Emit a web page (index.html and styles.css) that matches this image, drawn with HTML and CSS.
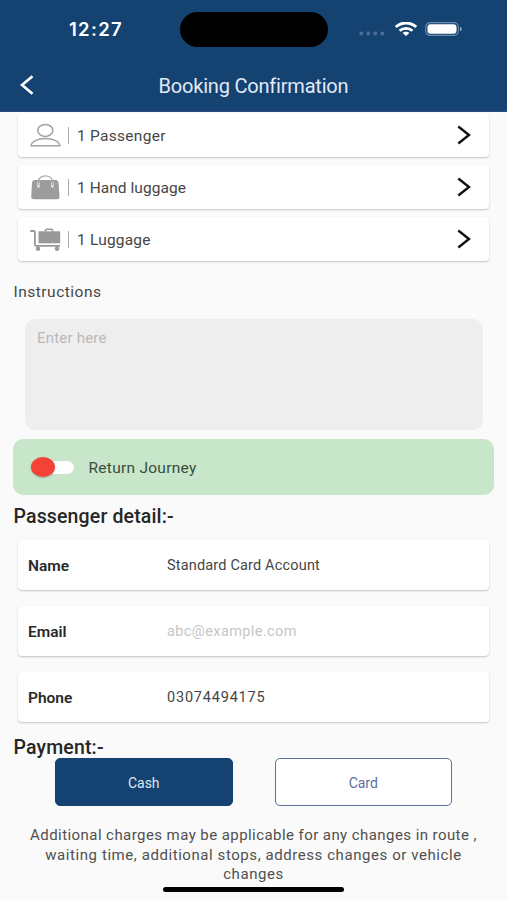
FILE: index.html
```html
<!DOCTYPE html>
<html lang="en">
<head>
<meta charset="utf-8">
<meta name="viewport" content="width=device-width, initial-scale=1">
<title>Booking Confirmation</title>
<link rel="stylesheet" href="styles.css">
</head>
<body>
<div class="screen">
  <header class="top">
    <div class="status">
      <span class="time">12:27</span>
      <span class="island"></span>
      <span class="signals">
        <svg class="dots" width="26" height="5" viewBox="0 0 26 5" fill="#4a7099"><circle cx="2.3" cy="2.5" r="2"/><circle cx="9.3" cy="2.5" r="2"/><circle cx="16.3" cy="2.5" r="2"/><circle cx="23.3" cy="2.5" r="2"/></svg>
        <svg class="wifi" width="22" height="14" viewBox="0 0 22 14" fill="none" stroke="#fff"><path d="M.8 5C6.5-.4 15.5-.4 21.200 5" stroke-width="2.900"/><path d="M4.600 8.800c3.600-3.300 9.200-3.300 12.800 0" stroke-width="2.700"/><path d="M11 13.900 7.600 10.900c1.800-1.700 5-1.700 6.800 0z" fill="#fff" stroke="none"/></svg>
        <svg class="battery" width="38" height="14" viewBox="0 0 38 14"><rect x=".7" y=".7" width="32.600" height="12.600" rx="4.300" fill="none" stroke="#6d8bad" stroke-width="1.200"/><rect x="2.500" y="2.300" width="29" height="9.400" rx="3" fill="#fff"/><path d="M35 4.700c2.400.7 2.400 3.900 0 4.600z" fill="#8ba3bf"/></svg>
      </span>
    </div>
    <div class="bar">
      <svg class="back" width="14" height="20" viewBox="0 0 14 20" fill="none" stroke="#fff" stroke-width="2.700"><path d="M12.500 1.200 2 10l10.500 8.800"/></svg>
      <h1 class="title">Booking Confirmation</h1>
    </div>
  </header>
  <main class="content">
    <section class="options">
      <div class="card option">
        <svg class="icon" width="32" height="26" viewBox="0 0 32 26" fill="none" stroke="#a3a3a3" stroke-width="1.500"><ellipse cx="15.300" cy="7.400" rx="7.500" ry="6"/><path d="M1.100 22.700c1-9.500 27.800-9.500 28.800 0z"/></svg>
        <span class="divider"></span><span class="label">1 Passenger</span>
        <svg class="chevron" width="14" height="20" viewBox="0 0 14 20"><path d="M1.300 1.500 12 10 1.300 18.500"/></svg>
      </div>
      <div class="card option">
        <svg class="icon" width="32" height="26" viewBox="0 0 32 26" fill="none"><path d="M4.500 5H26q2.200 0 2.500 2.500L29.500 22q0 2.300-2.300 2.300H3.500Q1.200 24.300 1.200 22L2 7.500Q2.300 5 4.500 5z" fill="#9c9c9c"/><path d="M8.400 7.500v4M22.400 7.500v4" stroke="#fff" stroke-width="2.200" stroke-linecap="round"/><path d="M8.400 10.500V6.500c0-7.600 14-7.600 14 0v4" stroke="#a3a3a3" stroke-width="1.200"/></svg>
        <span class="divider"></span><span class="label hand">1 Hand luggage</span>
        <svg class="chevron" width="14" height="20" viewBox="0 0 14 20"><path d="M1.300 1.500 12 10 1.300 18.500"/></svg>
      </div>
      <div class="card option">
        <svg class="icon" width="32" height="26" viewBox="0 0 32 26" fill="none"><path d="M.3 4h3.400q1.200 0 1.200 1.200v12.300q0 1.300 1.300 1.300H30" stroke="#999" stroke-width="1.800"/><path d="M8.500 4.300h21.700v12H8.500z" fill="#999"/><path d="M15.600 4.500V3.300q0-1 1-1h5q1 0 1 1v1.200" stroke="#999" stroke-width="1.600"/><path d="M8 19v2M27 19v2" stroke="#999" stroke-width="2"/><circle cx="8" cy="21.700" r="2.200" fill="#999"/><circle cx="27" cy="21.700" r="2.200" fill="#999"/></svg>
        <span class="divider"></span><span class="label lug">1 Luggage</span>
        <svg class="chevron" width="14" height="20" viewBox="0 0 14 20"><path d="M1.300 1.500 12 10 1.300 18.500"/></svg>
      </div>
    </section>
    <h2 class="instructions">Instructions</h2>
    <div class="note">Enter here</div>
    <div class="return">
      <span class="switch"><span class="knob"></span><span class="track"></span></span>
      <span class="return-label">Return Journey</span>
    </div>
    <h2 class="heading">Passenger detail:-</h2>
    <section class="fields">
      <div class="card field"><span class="key">Name</span><span class="value">Standard Card Account</span></div>
      <div class="card field"><span class="key">Email</span><span class="value empty">abc@example.com</span></div>
      <div class="card field"><span class="key">Phone</span><span class="value phone">03074494175</span></div>
    </section>
    <h2 class="heading payment">Payment:-</h2>
    <div class="buttons">
      <div class="button primary">Cash</div>
      <div class="button">Card</div>
    </div>
    <p class="notice"><span class="first">Additional charges may be applicable for any changes in route ,</span><br>waiting time, additional stops, address changes or vehicle<br>changes</p>
    <div class="home"></div>
  </main>
</div>
</body>
</html>
```
FILE: styles.css
```css
* { box-sizing: border-box; }
body { margin: 0; font-family: Roboto, "Liberation Sans", sans-serif; color: #464646; background: #fafafa; }
h1, h2, p { margin: 0; font-weight: 400; }
svg { display: block; flex: none; }
.screen { width: 507px; height: 900px; overflow: hidden; display: flex; flex-direction: column; }
.top { height: 112px; flex: none; background: #144372; border-bottom: 1px solid #2c4b82; color: #fff; }
.status { height: 59px; padding-top: 12px; display: grid; grid-template-columns: 180px 148px 1fr; }
.time { padding-left: 69px; font: 600 18.5px/35px Inter, sans-serif; letter-spacing: 1.3px; }
.island { height: 35px; border-radius: 18px; background: #000; }
.signals { display: flex; padding-left: 31px; }
.dots { margin-top: 19px; }
.wifi { margin: 10px 0 0 10px; }
.battery { margin: 10px 0 0 8px; }
.bar { height: 52px; display: grid; grid-template-columns: 48px 1fr 48px; align-items: center; }
.back { margin-left: 20px; }
.title { text-align: center; color: #e2e9f5; font-size: 20px; line-height: 26px; letter-spacing: -.2px; padding-top: 2px; }
.content { flex: 1; display: flex; flex-direction: column; }
.card { background: #fff; border-radius: 4px; box-shadow: 0 1px 2px rgba(0,0,0,.22); display: flex; align-items: center; }
.options { display: flex; flex-direction: column; gap: 8px; padding: 1px 18px 0; }
.option { height: 44px; padding: 0 18px 0 12px; }
.icon { margin-top: 1px; }
.divider { width: 1px; height: 17px; margin: 0 8px 0 6px; background: #aaa; }
.label { flex: 1; font-size: 15.5px; letter-spacing: .28px; padding-top: 1px; }
.hand { letter-spacing: .05px; }
.lug { letter-spacing: .2px; }
.chevron { fill: none; stroke: #111; stroke-width: 2.4; }
.instructions { margin: 21px 0 0 13.5px; font-size: 15.5px; line-height: 20px; letter-spacing: .5px; }
.note { height: 111px; margin: 17px 24px 0 25px; padding: 9px 12px; border-radius: 10px; background: #eee; color: #b9b9b9; font-size: 15px; line-height: 20px; letter-spacing: .2px; }
.return { height: 56px; margin: 9px 13px 0; padding-left: 18px; border-radius: 10px; background: #c8e6c9; color: #3c4c3d; display: flex; align-items: center; }
.switch { width: 43px; display: flex; align-items: center; }
.knob { position: relative; flex: none; width: 24px; height: 20px; border-radius: 50%; background: #f44336; box-shadow: 0 1px 2px rgba(0,0,0,.25); }
.track { flex: 1; height: 13px; margin-left: -10px; border-radius: 7px; background: #fff; }
.return-label { margin-left: 14.5px; padding-top: 1px; font-size: 15.5px; letter-spacing: .27px; }
.heading { margin: 9px 0 0 13.5px; color: #262626; font-size: 19.5px; line-height: 26px; font-weight: 500; letter-spacing: .15px; }
.fields { display: flex; flex-direction: column; gap: 16px; padding: 10px 18px 0; }
.field { height: 50px; padding: 1px 0 0 10px; }
.key { width: 139px; color: #292929; font-size: 15.5px; font-weight: 600; }
.value { font-size: 14.5px; letter-spacing: .17px; }
.empty { color: #c6c6c6; letter-spacing: .4px; }
.phone { letter-spacing: .8px; }
.payment { margin-top: 13px; }
.buttons { display: flex; gap: 42px; padding: 0 55px; margin-top: -3px; }
.button { flex: 1; height: 48px; padding-top: 1px; border: 1.500px solid #5d6ea0; border-radius: 5px; background: #fff; color: #62709d; display: flex; align-items: center; justify-content: center; font-size: 14px; }
.primary { background: #144372; border-color: #144372; color: #dfe7f4; }
.notice { margin-top: 20px; text-align: center; font-size: 15px; line-height: 19.500px; letter-spacing: .57px; white-space: nowrap; color: #505050; }
.first { letter-spacing: .43px; }
.home { width: 181px; height: 5px; margin: 2px auto 0; border-radius: 3px; background: #000; }
```
